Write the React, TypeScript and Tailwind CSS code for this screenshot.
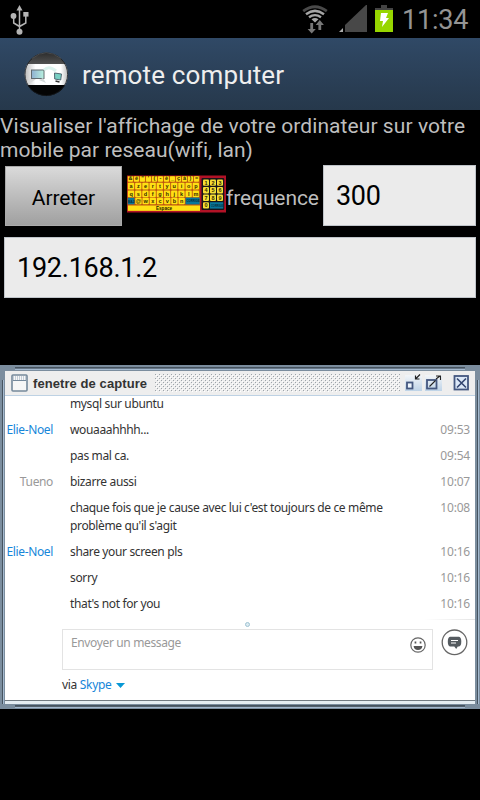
import React from "react";

const messages = [
  { who: "", text: ["mysql sur ubuntu"], time: "" },
  { who: "Elie-Noel", text: ["wouaaahhhh..."], time: "09:53", blue: true },
  { who: "", text: ["pas mal ca."], time: "09:54" },
  { who: "Tueno", text: ["bizarre aussi"], time: "10:07" },
  {
    who: "",
    text: ["chaque fois que je cause avec lui c'est toujours de ce même", "problème qu'il s'agit"],
    time: "10:08",
  },
  { who: "Elie-Noel", text: ["share your screen pls"], time: "10:16", blue: true },
  { who: "", text: ["sorry"], time: "10:16" },
  { who: "", text: ["that's not for you"], time: "10:16" },
];

const keyRows = ["&é\"'(-è_çà)=", "azertyuiop", "qsdfghjklm"];

function UsbIcon() {
  return (
    <svg width="20" height="32" viewBox="0 0 20 32" fill="none" stroke="#b4b4b4" strokeWidth="1.5">
      <path d="M9.5 27V6M9.5 22.5L3.7 19V12M9.5 22.5L15.8 19V10" />
      <path d="M9.5 1L6.5 6.5h6z" fill="#b4b4b4" stroke="none" />
      <circle cx="3.5" cy="12" r="2.9" fill="#b4b4b4" stroke="none" />
      <rect x="13.3" y="8" width="5.2" height="4.6" fill="#b4b4b4" stroke="none" />
      <circle cx="9.5" cy="27.8" r="3" fill="#b4b4b4" stroke="none" />
    </svg>
  );
}

function WifiIcon() {
  return (
    <svg width="27" height="30" viewBox="0 0 27 30" fill="none">
      <path d="M1.2 6.2Q13 -2.6 24.8 6.2" stroke="#4a4a4a" strokeWidth="2.8" />
      <path d="M4 9.2Q13 2.6 22 9.2" stroke="#a5a5a5" strokeWidth="2.5" />
      <path d="M7 12.2Q13 8 19 12.2" stroke="#a5a5a5" strokeWidth="2.4" />
      <path d="M9.5 14.2Q13 12 16.5 14.2L13 17.5z" fill="#a5a5a5" />
      <path d="M8.3 18h2.8v6h2.7L9.7 28.5 5.6 24h2.7zM16.4 25h2.8v-5h2.7L17.8 15 13.7 20h2.7z" fill="#777" />
    </svg>
  );
}

function Keyboard() {
  return (
    <svg width="99" height="38" viewBox="0 0 99 38" fontFamily="Liberation Sans, sans-serif" fontWeight="bold">
      <rect y="0.5" width="99" height="37" fill="#b11226" />
      <rect x="0.5" y="1" width="72.5" height="35" fill="#bd5410" />
      {keyRows.map((row, r) => {
        const w = 72 / row.length;
        const h = r === 0 ? 5.5 : 6.7;
        const y = r === 0 ? 1.3 : r === 1 ? 7.8 : 15.6;
        return row.split("").map((c, i) => (
          <g key={r + "-" + i}>
            <rect x={0.9 + i * w} y={y} width={w - 0.9} height={h} rx="0.8" fill="#ffe014" />
            <text x={0.5 + i * w + w / 2} y={y + h - 1.5} fontSize="5.5" textAnchor="middle" fill="#332a00">{c}</text>
          </g>
        ));
      })}
      <rect x="0.7" y="22.8" width="6.7" height="6.5" fill="#08779a" />
      <text x="1" y="27.5" fontSize="3" fill="#072b38">MAJ</text>
      {"@wxcvbn".split("").map((c, i) => (
        <g key={c}>
          <rect x={8.3 + i * 7.2} y="22.8" width="6.3" height="6.5" rx="0.8" fill="#ffe014" />
          <text x={11.4 + i * 7.2} y="27.8" fontSize="5.5" textAnchor="middle" fill="#332a00">{c}</text>
        </g>
      ))}
      <rect x="58.6" y="22.6" width="14" height="6.8" fill="#08779a" />
      <text x="59.6" y="27.4" fontSize="2.8" fill="#072b38">CORRIGE</text>
      <rect x="1" y="30.5" width="72" height="5.3" fill="#ffe014" />
      <text x="37" y="35" fontSize="4.6" textAnchor="middle" fill="#221b00">Espace</text>
      <rect x="74.5" y="3" width="22.7" height="32" rx="1" fill="#17151a" />
      {"1234567890".split("").map((c, i) => {
        const x = 76 + (i % 3) * 7;
        const y = 4.4 + Math.floor(i / 3) * 7.6;
        return (
          <g key={c}>
            <rect x={x} y={y} width="6" height="6.4" rx="1" fill="#f6df35" />
            <text x={x + 3} y={y + 5.2} fontSize="5.5" textAnchor="middle" fill="#332a00">{c}</text>
          </g>
        );
      })}
      <rect x="83" y="27.2" width="13.3" height="6.4" fill="#08779a" />
      <text x="84" y="31.6" fontSize="2.6" fill="#072b38">CORRIGE</text>
    </svg>
  );
}

function AppLogo() {
  return (
    <svg width="46" height="48" viewBox="0 0 46 48">
      <defs>
        <clipPath id="disc"><circle cx="22.3" cy="24.3" r="21.7" /></clipPath>
        <linearGradient id="cap" x1="0" y1="0" x2="0" y2="1">
          <stop offset="0" stopColor="#242424" />
          <stop offset="1" stopColor="#555" />
        </linearGradient>
        <linearGradient id="band" x1="0" x2="1">
          <stop offset="0" stopColor="#b5b5b5" />
          <stop offset=".25" stopColor="#fff" />
          <stop offset=".8" stopColor="#fff" />
          <stop offset="1" stopColor="#a8a8a8" />
        </linearGradient>
        <linearGradient id="screen" x1="0" x2="1">
          <stop offset="0" stopColor="#8fb0d1" />
          <stop offset="1" stopColor="#b9f1df" />
        </linearGradient>
      </defs>
      <g clipPath="url(#disc)">
        <rect width="46" height="15" fill="url(#cap)" />
        <rect y="14" width="46" height="22" fill="url(#band)" />
        <rect y="35" width="46" height="13" fill="#040404" />
        <path d="M3 31Q8 27 12 29L5 34z" fill="#d8d8d8" />
        <rect x="7.5" y="20" width="12.5" height="8.5" fill="url(#screen)" stroke="#626c70" />
        <path d="M15 30l4-2 3 5z" fill="#d4dada" />
        <path d="M20 20Q25 15 32 21" stroke="#dcf3ee" fill="none" strokeWidth="3" />
        <path d="M30.5 23l7 1-.8 6-6-1z" fill="#78cfc3" stroke="#465a67" strokeWidth=".9" />
        <path d="M31.5 31l4 1" stroke="#333" strokeWidth="1.6" />
      </g>
      <circle cx="22.3" cy="24.3" r="21.3" fill="none" stroke="#15191e" strokeWidth=".8" />
      <path d="M8 8.5Q22-3 37 8.5" fill="none" stroke="#666" strokeWidth=".6" />
    </svg>
  );
}

function CaptureWindow() {
  return (
    <section className="relative mt-[67px] flex h-[344px] w-[480px] flex-col bg-[#7b8d9e] px-[5px] pt-[6px]">
      <div className="absolute left-[15px] top-[2px] h-[3px] w-[450px] border-t border-b border-t-[#46535f] border-b-[#a4b9cf] bg-[#667687]" />
      <div className="absolute bottom-px left-[15px] h-[3px] w-[450px] border-t border-b border-t-[#46535f] border-b-[#a4b9cf] bg-[#52606d]" />
      <div className="absolute left-[2px] top-[15px] h-[324px] w-[2px] border-l border-l-[#46535f] bg-[#a4b9cf]" />
      <div className="absolute right-px top-[15px] h-[324px] w-[2px] border-l border-l-[#46535f] bg-[#a4b9cf]" />
      <header className="flex h-[25px] shrink-0 items-center border-b border-b-[#bed2e4] bg-[#eee] pl-[6px]">
        <svg width="17" height="18" viewBox="0 0 17 18">
          <rect x="1" y="1" width="15" height="16" rx="1" fill="#f7f7f7" stroke="#75899b" strokeWidth="1.6" />
          <path d="M2 3H15M2 5H15" stroke="#91a5b9" strokeDasharray="1 1" />
          <path d="M2 6.5H15" stroke="#75899b" />
        </svg>
        <h2 className="ml-[5px] w-[115px] whitespace-nowrap pt-px font-['Liberation_Sans',sans-serif] text-[13px] font-bold leading-[18px] tracking-[0.08px] text-[#333]">fenetre de capture</h2>
        <svg className="ml-[7px]" width="245" height="18">
          <defs>
            <pattern id="dots" width="4" height="4" patternUnits="userSpaceOnUse">
              <path d="M0 0h1v1H0zM2 2h1v1H2z" fill="#9da4aa" />
              <path d="M1 1h1v1H1zM3 3h1v1H3z" fill="#fff" />
            </pattern>
          </defs>
          <rect width="245" height="18" fill="url(#dots)" />
        </svg>
        <svg className="ml-[4px]" width="70" height="20" viewBox="0 0 70 20" fill="none">
          <defs>
            <linearGradient id="pad" x1="0" y1="0" x2="0" y2="1">
              <stop offset="0" stopColor="#f2f5f8" />
              <stop offset="1" stopColor="#bed3e7" />
            </linearGradient>
          </defs>
          <path d="M1 2h17v16H1zM21 2h17v16H21z" fill="url(#pad)" />
          <rect x="3" y="9.5" width="5.5" height="6" stroke="#44577f" strokeWidth="1.8" fill="#eef5fc" />
          <path d="M16 1.5l-4 4M11.5 2.5v3.5h4" stroke="#222" strokeWidth="1.2" />
          <rect x="23" y="7" width="9.5" height="8.5" stroke="#44577f" strokeWidth="1.8" />
          <path d="M25.5 13.5l6-6M32 6l4-3M32 3h4.5v4" stroke="#222" strokeWidth="1.1" />
          <rect x="50.5" y="3" width="13.5" height="13.5" stroke="#44577f" strokeWidth="1.8" fill="#dce8f7" />
          <path d="M53 5.5l9 9M62 5.5l-9 9" stroke="#33456f" strokeWidth="1.6" />
        </svg>
      </header>
      <main className="flex h-[304px] shrink-0 flex-col bg-white font-['Noto_Sans',sans-serif] text-[12px] leading-[18px] tracking-[-0.36px] text-[#333]">
        <div className="flex h-[222px] flex-col">
          {messages.map((m, i) => (
            <div key={i} className={"flex shrink-0 " + (m.text.length > 1 ? "h-[44px]" : "h-[26px]") + (i === 0 ? " -mt-px" : "")}>
              <span className={"w-[48px] shrink-0 whitespace-nowrap text-right " + (m.blue ? "text-[#1686d9]" : "text-[#999]")}>{m.who}</span>
              <div className="ml-[17px] w-[340px] shrink-0 whitespace-nowrap">
                {m.text.map((line) => <p key={line}>{line}</p>)}
              </div>
              <time className="ml-auto pr-[5px] text-[#999] tracking-[-0.2px]">{m.time}</time>
            </div>
          ))}
        </div>
        <div className="flex h-[12px] shrink-0 items-start justify-end">
          <span className="mr-[174px] mt-[4px] h-[5px] w-[5px] shrink-0 rounded-full border border-[#9fc3d3] bg-[#dcebf1]" />
          <span className="mt-[1px] h-px w-[51px] bg-gradient-to-r from-white to-[#e5e5e5]" />
        </div>
        <div className="flex">
          <div className="ml-[57px] mt-[-1px] flex h-[41px] w-[371px] justify-between border border-[#e3e3e3] pl-[8px] pr-[6px] pt-[4px]">
            <span className="text-[#999]">Envoyer un message</span>
            <svg className="mt-[3px]" width="16" height="16" viewBox="0 0 16 16">
              <circle cx="8" cy="8" r="7.2" fill="none" stroke="#666" strokeWidth="1.2" />
              <path d="M4.6 4.5h1.7v2H4.6zM9.7 4.5h1.7v2H9.7zM3.6 9h8.8Q12 13 8 13T3.6 9z" fill="#555" />
            </svg>
          </div>
          <svg className="ml-[8px] mt-[-1px]" width="27" height="27" viewBox="0 0 27 27">
            <circle cx="13.5" cy="13.3" r="12.3" fill="none" stroke="#666" strokeWidth="1.3" />
            <path d="M9 7.7h9Q20.3 8 20.3 12.6T18 17.6H16.8L15.2 20 13.3 17.6H9Q6.8 17 6.8 12.6T9 7.7z" fill="#555b60" />
            <path d="M10 11.5h7M10 14h5" stroke="#fff" />
          </svg>
        </div>
        <div className="ml-[57px] mt-[6px] flex items-center">
          <span>via</span><span className="ml-[3px] text-[#1686d9]">Skype</span>
          <svg className="ml-[5px]" width="9" height="5"><path d="M0 0h9L4.5 5z" fill="#0798d5" /></svg>
        </div>
      </main>
      <div className="h-[4px] shrink-0 border-t border-t-[#727b82] bg-[#e5edf2]" />
    </section>
  );
}

export default function App() {
  return (
    <div className="h-[800px] w-[480px] overflow-hidden bg-black font-['Roboto',sans-serif]">
      <div className="flex h-[38px] items-center">
        <div className="ml-[10px] mt-[2px]"><UsbIcon /></div>
        <div className="ml-auto flex items-center">
          <div className="mt-[1px]"><WifiIcon /></div>
          <svg className="ml-[10px]" width="29" height="28" viewBox="0 0 29 28">
            <path d="M6 27V20L27 0h1v27z" fill="#484848" />
            <path d="M0 27l4-4v4z" fill="#aaa" />
          </svg>
          <svg className="ml-[7px]" width="18" height="28" viewBox="0 0 18 28">
            <path d="M6 0h6v3h6v5H0V3h6z" fill="#444" />
            <rect y="5" width="18" height="22" fill="#97d600" />
            <path d="M6 8h7l-2 5h3L7 22l1-6H5z" fill="#fff" />
          </svg>
          <span className="ml-[9px] mr-[11px] w-[67px] whitespace-nowrap pt-px text-[27px] leading-[36px] tracking-[-0.2px] text-[#949494]">11:34</span>
        </div>
      </div>
      <header className="flex h-[72px] items-center bg-gradient-to-b from-[#304966] to-[#26384b]">
        <div className="ml-[24px]"><AppLogo /></div>
        <h1 className="ml-[12px] whitespace-nowrap pt-[2px] text-[26px] leading-[32px] tracking-[0.15px] text-[#eeeeee]">remote computer</h1>
      </header>
      <div className="flex h-[55px] flex-col whitespace-nowrap pt-[4px] text-[21px] leading-[24px] text-[#bebebe]">
        <p className="tracking-[0.08px]">Visualiser l'affichage de votre ordinateur sur votre</p>
        <p className="tracking-[0.01px]">mobile par reseau(wifi, lan)</p>
      </div>
      <div className="flex h-[62px] items-start">
        <button className="ml-[5px] mt-px h-[60px] w-[117px] border border-[#aaa] bg-gradient-to-b from-[#dadada] to-[#a0a0a0] pt-[5px] text-[21px] tracking-[-0.1px] text-black">Arreter</button>
        <div className="ml-[5px] mt-[10px]"><Keyboard /></div>
        <span className="mt-[21px] w-[97px] whitespace-nowrap text-[21px] leading-[24px] tracking-[-0.1px] text-[#bebebe]">frequence</span>
        <div className="h-[61px] w-[153px] border border-[#bfc4c9] bg-[#ebebeb] pl-[12px] pt-[13px] text-[27px] leading-[34px] tracking-[-0.3px] text-black">300</div>
      </div>
      <div className="ml-[4px] mt-[10px] h-[61px] w-[472px] border border-[#bfc4c9] bg-[#ebebeb] pl-[12px] pt-[13px] text-[27px] leading-[34px] tracking-[-0.25px] text-black">192.168.1.2</div>
      <CaptureWindow />
    </div>
  );
}
